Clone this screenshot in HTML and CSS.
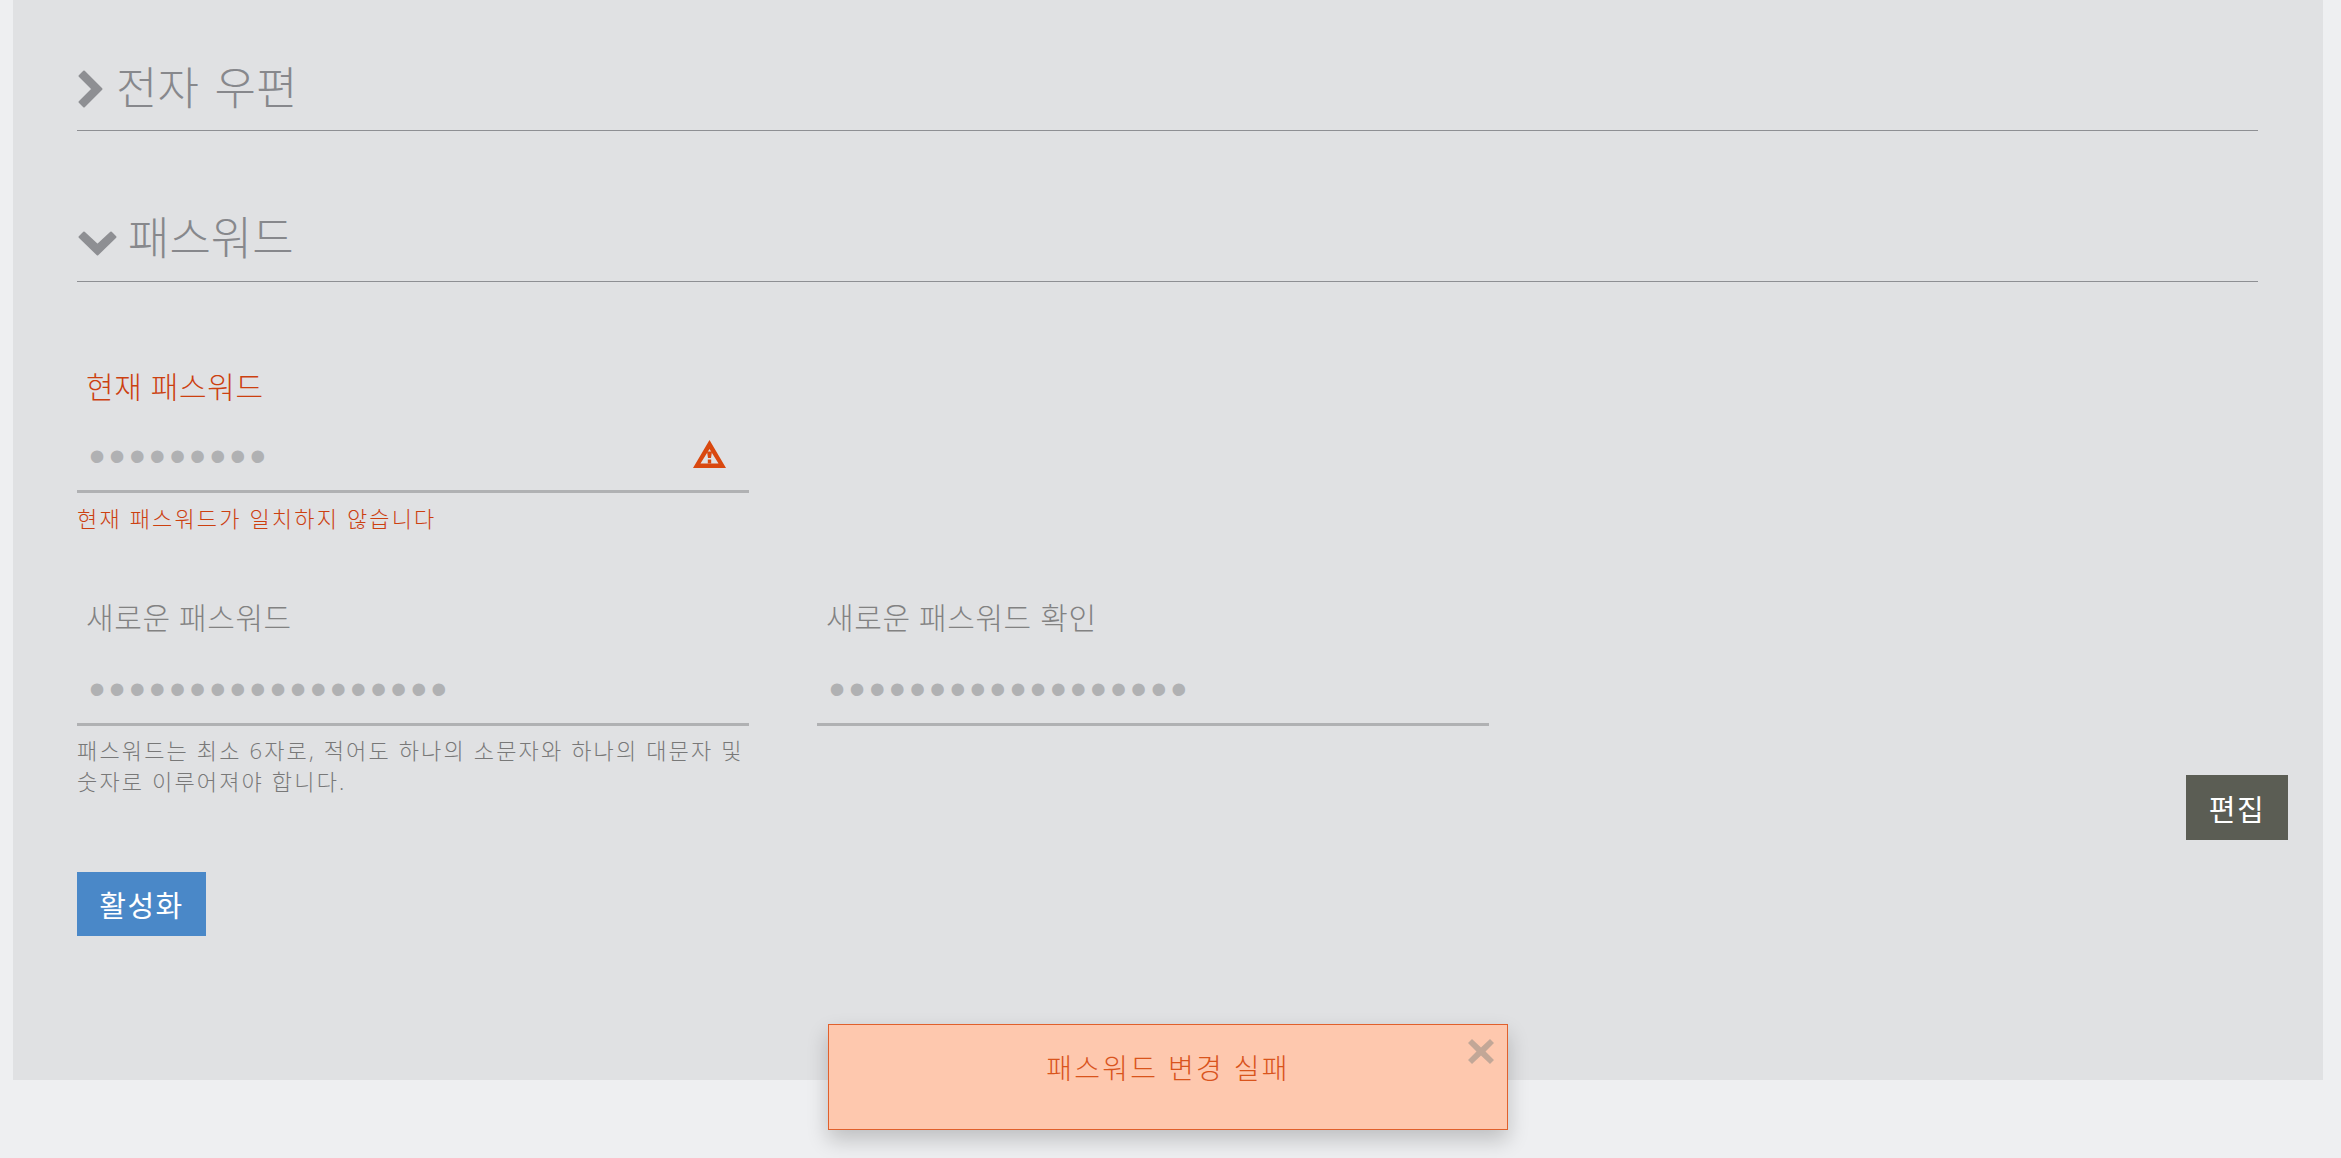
FILE: index.html
```html
<!DOCTYPE html>
<html lang="ko">
<head>
    <meta charset="UTF-8">
    <meta name="viewport" content="width=device-width, initial-scale=1.0">
    <title>패스워드</title>
    <link rel="stylesheet" href="styles.css">
</head>
<body>
    <div class="panel">
        <!-- Email section -->
        <div class="section-head section-head-first">
            <svg class="chevron-right" viewBox="0 0 25 38"><path d="M6 1.5 L23.5 19 L6 36.5 L1.5 32 L14.5 19 L1.5 6 Z"/></svg>
            <h2>전자 우편</h2>
        </div>

        <!-- Password section -->
        <div class="section-head">
            <svg class="chevron-down" viewBox="0 0 39 25"><path d="M6 1.5 L19.5 14 L33 1.5 L37.5 6 L19.5 23.5 L1.5 6 Z"/></svg>
            <h2>패스워드</h2>
        </div>

        <div class="body-row">
            <form class="password-form">
                <div class="field-row">
                    <div class="field field-error">
                        <label for="currentPassword">현재 패스워드</label>
                        <div class="input-wrap">
                            <input type="password" id="currentPassword" value="123456789">
                            <svg class="warn-icon" viewBox="0 0 33 28"><path fill-rule="evenodd" d="M16.5 0 L33 28 L0 28 Z M16.5 9 L7.5 23.5 L25.5 23.5 Z"/><path d="M14 11.5 H19 L18 18 H15 Z M14.8 19.5 H18.2 V23.5 H14.8 Z"/></svg>
                        </div>
                        <p class="field-note">현재 패스워드가 일치하지 않습니다</p>
                    </div>
                </div>
                <div class="field-row field-row-second">
                    <div class="field">
                        <label for="newPassword">새로운 패스워드</label>
                        <div class="input-wrap">
                            <input type="password" id="newPassword" value="123456789012345678">
                        </div>
                        <p class="field-note">패스워드는 최소 6자로, 적어도 하나의 소문자와 하나의 대문자 및 숫자로 이루어져야 합니다.</p>
                    </div>
                    <div class="field">
                        <label for="confirmPassword">새로운 패스워드 확인</label>
                        <div class="input-wrap">
                            <input type="password" id="confirmPassword" value="123456789012345678">
                        </div>
                    </div>
                </div>
                <button type="button" class="btn-activate">활성화</button>
            </form>
            <button type="button" class="btn-edit">편집</button>
        </div>
    </div>

    <div class="toast">
        <span>패스워드 변경 실패</span>
        <svg class="toast-close" viewBox="0 0 26 25"><path d="M4 0 L13 8.5 L22 0 L26 4 L17.5 12.5 L26 21 L22 25 L13 16.5 L4 25 L0 21 L8.5 12.5 L0 4 Z"/></svg>
    </div>
</body>
</html>
```

FILE: styles.css
```css
* {
    box-sizing: border-box;
}

html, body {
    height: 100%;
}

body {
    margin: 0;
    position: relative;
    overflow: hidden;
    background-color: #eeeff1;
    font-family: "Open Sans", "Noto Sans CJK KR", sans-serif;
}

.panel {
    height: 1080px;
    margin: 0 18px 0 13px;
    padding: 0 65px 0 64px;
    background-color: #e0e1e3;
}

.section-head {
    display: flex;
    align-items: center;
    gap: 11px;
    height: 151px;
    padding: 76px 0 12px;
    border-bottom: 1px solid #8e8f93;
}

.section-head-first {
    height: 131px;
    padding: 53px 0 7px;
    gap: 13px;
}

.section-head h2 {
    margin: 0;
    font-size: 45px;
    word-spacing: 4px;
    line-height: 60px;
    font-weight: 300;
    color: #87888c;
}

.section-head svg {
    fill: #8e8f93;
    stroke: #8e8f93;
    stroke-width: 2;
    stroke-linejoin: round;
    flex: none;
}

.chevron-right {
    width: 25px;
    height: 38px;
    margin-left: 1px;
    margin-top: 1px;
}

.chevron-down {
    width: 39px;
    height: 25px;
    margin-left: 1px;
    margin-top: 11px;
}

.body-row {
    display: flex;
    align-items: flex-start;
}

.password-form {
    flex: 1;
    padding-top: 85px;
}

.field-row {
    display: flex;
    gap: 68px;
}

.field-row-second {
    margin-top: 64px;
    margin-bottom: 75px;
}

.field {
    width: 672px;
}

.field label {
    display: block;
    padding-left: 9px;
    font-size: 30px;
    font-weight: 300;
    letter-spacing: 0.6px;
    line-height: 40px;
    color: #828282;
}

.field-error label {
    color: #cc4010;
}

.input-wrap {
    display: flex;
    align-items: center;
    height: 86px;
    padding-top: 14px;
    border-bottom: 3px solid #b0b1b3;
}

.field-row-second .input-wrap {
    height: 88px;
    padding-top: 16px;
}

.input-wrap input {
    flex: 1;
    min-width: 0;
    padding: 0 0 0 12px;
    border: none;
    outline: none;
    background: transparent;
    font-family: "Liberation Sans", sans-serif;
    font-size: 46px;
    letter-spacing: 4px;
    color: #b0b1b3;
}

.warn-icon {
    width: 33px;
    height: 28px;
    margin: -4px 23px 0 0;
    fill: #d9480f;
    flex: none;
}

.field-note {
    margin: 10px 0 0;
    font-size: 22px;
    font-weight: 300;
    letter-spacing: 2.15px;
    line-height: 31px;
    color: #787878;
}

.field-row-second .field-note {
    margin-top: 9px;
}

.field-error .field-note {
    color: #cc4010;
}

.btn-activate, .btn-edit {
    border: none;
    border-radius: 0;
    font-family: inherit;
    font-size: 29px;
    letter-spacing: 1.5px;
    color: white;
    cursor: pointer;
}

.btn-activate {
    display: block;
    width: 129px;
    height: 64px;
    padding: 0;
    background-color: #4a88c8;
}

.btn-edit {
    flex: none;
    width: 102px;
    height: 65px;
    padding: 0;
    margin: 493px -30px 0 0;
    background-color: #5b5d54;
}

.toast {
    position: absolute;
    left: 828px;
    top: 1024px;
    width: 680px;
    height: 106px;
    padding-top: 23px;
    text-align: center;
    font-size: 28px;
    font-weight: 300;
    letter-spacing: 2.3px;
    line-height: 40px;
    color: #d9541c;
    background-color: #fec8ae;
    border: 1px solid #e0602c;
    box-shadow: 0 10px 20px rgba(0, 0, 0, 0.2);
}

.toast-close {
    position: absolute;
    top: 14px;
    right: 13px;
    width: 26px;
    height: 25px;
    fill: #c2a797;
}
```
